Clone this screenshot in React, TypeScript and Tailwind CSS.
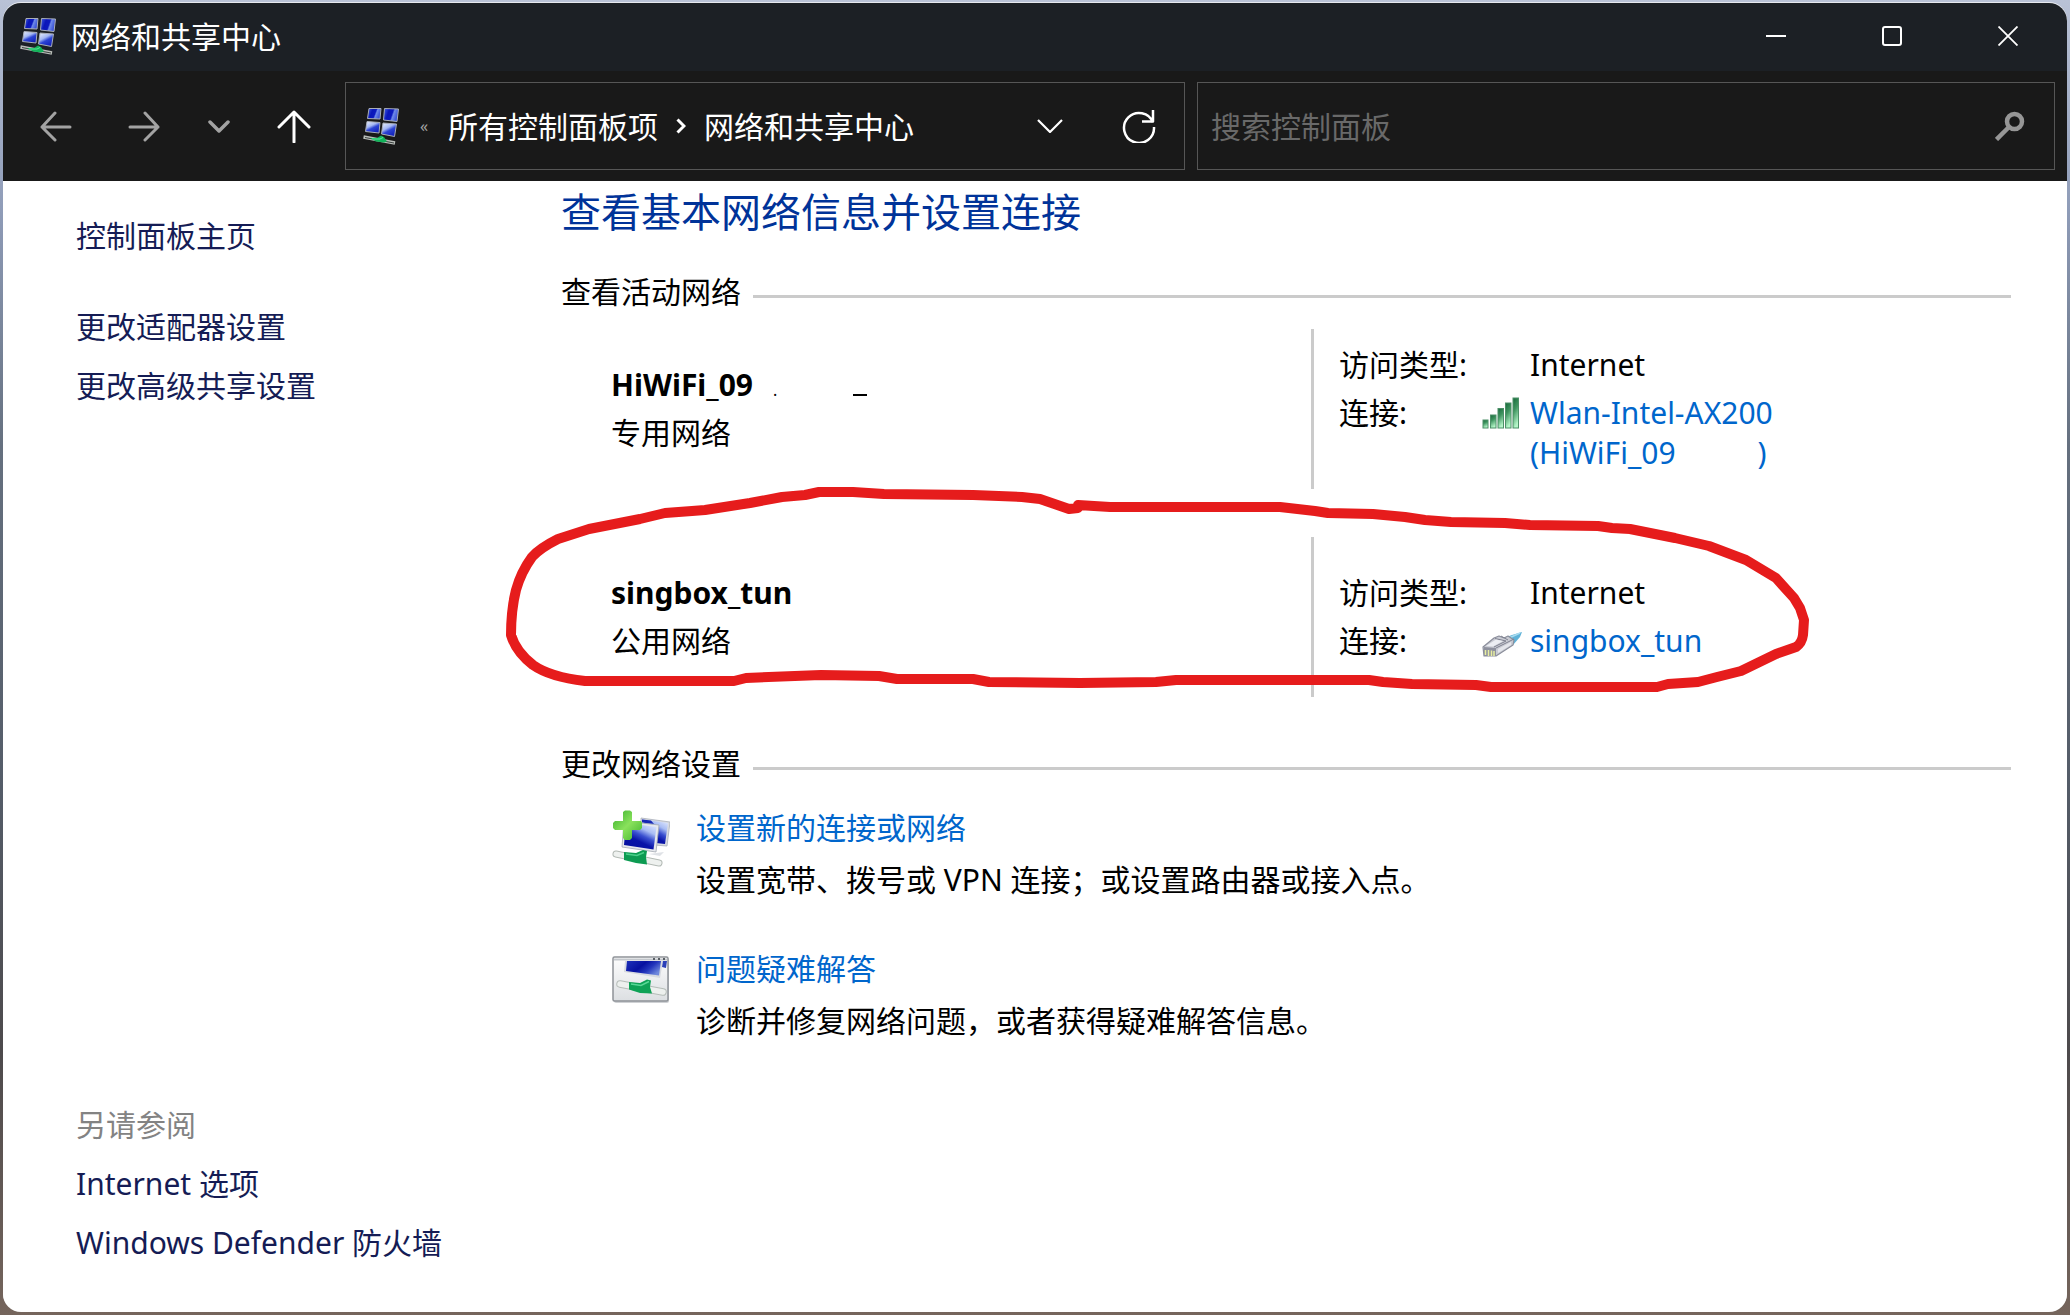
import type { ReactNode } from 'react';

interface NetworkRowProps {
  name: ReactNode;
  category: string;
  access: string;
  icon: ReactNode;
  connection: ReactNode;
  children?: ReactNode;
}

interface TaskProps {
  title: string;
  description: string;
  icon: ReactNode;
}

const NetworkCenterIcon = () => (
  <svg viewBox="0 0 37 38" className="h-[38px] w-[37px] shrink-0" aria-hidden="true">
    <defs>
      <linearGradient id="pane" x1="0" y1="0.3" x2="1" y2="0.6">
        <stop offset="0" stopColor="#3a55dc" />
        <stop offset="0.3" stopColor="#0a16b8" />
        <stop offset="0.55" stopColor="#0c1abf" />
        <stop offset="0.65" stopColor="#6f8aea" />
        <stop offset="1" stopColor="#2a42d0" />
      </linearGradient>
      <linearGradient id="paneLow" x1="0.2" y1="0" x2="0.8" y2="1">
        <stop offset="0" stopColor="#dfe7fc" />
        <stop offset="0.35" stopColor="#a3b6f2" />
        <stop offset="0.55" stopColor="#2c44d4" />
        <stop offset="1" stopColor="#0c1ab4" />
      </linearGradient>
    </defs>
    <g stroke="#a9aeb8" strokeWidth="1" strokeLinejoin="round">
      <path d="M6 1.500 18 1.500 17 12 4.500 11.500Z" fill="url(#pane)" />
      <path d="M21.500 1.500 35.500 2 34 14.500 20.500 13Z" fill="url(#pane)" />
      <path d="M4 14.500 17 15.500 16 26 2.500 24.500Z" fill="url(#paneLow)" />
      <path d="M20 16 33.500 17 31.500 29.500 18.500 27Z" fill="url(#paneLow)" />
    </g>
    <path d="M0.500 30 32 36" stroke="#b9bdb9" strokeWidth="3.500" />
    <path d="M2 30.500 31 36" stroke="#3c4240" strokeWidth="1" />
    <path d="M7 31 14 31 18 28.500 21 30 24 34.500 21 35.500 13 34.500Z" fill="#12b35a" />
    <path d="M9 32 17 32 20 30.500" stroke="#5de39a" strokeWidth="1" fill="none" />
  </svg>
);

const SignalIcon = () => (
  <svg viewBox="0 0 38 32" className="h-8 w-[38px]" aria-hidden="true">
    <defs>
      <linearGradient id="bar" x1="0" y1="0" x2="0.3" y2="1">
        <stop offset="0" stopColor="#17683a" />
        <stop offset="0.45" stopColor="#3f9560" />
        <stop offset="1" stopColor="#b4f5c8" />
      </linearGradient>
    </defs>
    <g fill="url(#bar)" stroke="#4d9068" strokeWidth="1">
      <rect x="1" y="23" width="5" height="8" />
      <rect x="8.500" y="18" width="5.500" height="13" />
      <rect x="16" y="11.500" width="5.500" height="19.500" />
      <rect x="23.500" y="6" width="5.500" height="25" />
      <rect x="31" y="1" width="5.500" height="30" />
    </g>
  </svg>
);

const EthernetIcon = () => (
  <svg viewBox="0 0 40 26" className="mt-2 h-[26px] w-10" aria-hidden="true">
    <path d="M22 6 30 3 40 0 38 5 31 13 26 15Z" fill="#5fb2d8" />
    <path d="M27 6 38 1" stroke="#a9dcf0" strokeWidth="1.5" />
    <path d="M1 15 12 6 17 4 22 6 26 4 32 8 31 13 14 24 2 24Z" fill="#c9cbd3" stroke="#8b8e9b" strokeWidth="1.2" strokeLinejoin="round" />
    <path d="M2 15 14 16 14 24 2 24Z" fill="#8e919e" />
    <path d="M14 16 32 7M13 6.500 24 9 12 15M19 4 26 8" stroke="#7f8291" strokeWidth="1" fill="none" />
    <path d="M4 14 14 7.500 21 9 11 14.500Z" fill="#eceef3" />
    <path d="M16 17 29 10 29 13 16 21Z" fill="#e4e6ec" />
    <path d="M3.500 18V23M6.500 18V24M9.500 18.500V24M12 19V24" stroke="#e8eea0" strokeWidth="1.500" />
  </svg>
);

const NewConnectionIcon = () => (
  <svg viewBox="0 0 58 58" className="h-[58px] w-[58px] shrink-0" aria-hidden="true">
    <defs>
      <linearGradient id="screen" x1="0" y1="0.1" x2="1" y2="0.6">
        <stop offset="0" stopColor="#1c2fb8" />
        <stop offset="0.45" stopColor="#0711a0" />
        <stop offset="0.7" stopColor="#2336bc" />
        <stop offset="1" stopColor="#6f88dc" />
      </linearGradient>
      <linearGradient id="screenMain" x1="0.9" y1="0" x2="0.3" y2="1">
        <stop offset="0" stopColor="#e4ebff" />
        <stop offset="0.3" stopColor="#a9bdf4" />
        <stop offset="0.5" stopColor="#3a50d0" />
        <stop offset="0.7" stopColor="#0914a8" />
        <stop offset="1" stopColor="#0510a0" />
      </linearGradient>
      <linearGradient id="plus" x1="0" y1="0" x2="1" y2="1">
        <stop offset="0" stopColor="#37ae2c" />
        <stop offset="0.5" stopColor="#8ae25c" />
        <stop offset="1" stopColor="#3fb22d" />
      </linearGradient>
    </defs>
    <path d="M29 8 58 12 55 36 29 34Z" fill="#d8dbe2" stroke="#aab0ba" strokeWidth="0.800" />
    <path d="M30 9.500 56 13 53 34 44 33Z" fill="url(#screenMain)" />
    <path d="M30 9.500 39 10.500 42 14 30 12.500Z" fill="#1627b4" />
    <path d="M37 44 52 42 48 46Z" fill="#dfe2e6" />
    <path d="M12 11 47 15 44 42 10 37Z" fill="#e6e8ed" stroke="#a3a9b3" strokeWidth="0.800" />
    <path d="M14 13 44.500 17 41.500 39.500 12 35Z" fill="url(#screenMain)" />
    <path d="M4 44 47 53" stroke="#b3bab5" strokeWidth="7" strokeLinecap="round" />
    <path d="M4 44 47 53" stroke="#eef1ef" strokeWidth="5" strokeLinecap="round" />
    <path d="M12 42 24 43 31 40 35 41 34 47 35 54.500 24 53 12 50Z" fill="#0d9b52" />
    <path d="M14 44 25 45.500 32 42.500" stroke="#4bd08a" strokeWidth="1.500" fill="none" />
    <path d="M11 2 13 0.500 18 0.500 20 2 20 11 29 11 30 13 30 18 28 20 20 20 20 28 18 30 13 30 11 28 11 20 3 20 1 18 1 13 3 11 11 11Z" fill="url(#plus)" />
  </svg>
);

const TroubleshootIcon = () => (
  <svg viewBox="0 0 58 58" className="h-[58px] w-[58px] shrink-0" aria-hidden="true">
    <defs>
      <linearGradient id="frame" x1="0" y1="0" x2="0" y2="1">
        <stop offset="0" stopColor="#fdfdfd" />
        <stop offset="1" stopColor="#dcdfe2" />
      </linearGradient>
    </defs>
    <rect x="2" y="7" width="55" height="45" rx="2" fill="#cfd1d4" />
    <rect x="1" y="6" width="55" height="44" rx="1.500" fill="url(#frame)" stroke="#8f9398" strokeWidth="1.500" />
    <path d="M2 7.500H55V9.500H2Z" fill="#c3c7cc" />
    <path d="M41 8H43M46 8H48M51 8H53" stroke="#5b6066" strokeWidth="1.800" />
    <path d="M13 10 51 10 48 27 12 21Z" fill="#d7dae0" />
    <path d="M15 10 49 10 47 24.500 14 20Z" fill="url(#screen)" />
    <path d="M51 10 55 10 54 17 50 16Z" fill="#2b40b8" />
    <path d="M8 33 51 41" stroke="#b6bdb9" strokeWidth="7.500" strokeLinecap="round" />
    <path d="M8 33 51 41" stroke="#edf0ee" strokeWidth="5.500" strokeLinecap="round" />
    <path d="M17 31 28 32 35 28.500 39 29.500 38 36 40 42.500 28 42 17 38.500Z" fill="#0ea256" />
    <path d="M19 33 29 34.500 37 30.500" stroke="#58d896" strokeWidth="1.500" fill="none" />
  </svg>
);

/* Freehand loop around the tunnel adapter */
const RedCircle = () => (
  <svg
    viewBox="500 480 1315 220"
    className="pointer-events-none absolute -top-[57px] -left-[61px] h-[220px] w-[1315px]"
    fill="none"
    stroke="#e61c1c"
    strokeWidth="10"
    strokeLinecap="round"
    strokeLinejoin="round"
    aria-hidden="true"
  >
    <path d="M1078 508 1069 509 1040 499 1022 497 973 495 884 494 853 492 819 492 805 495 782 497 750 503 705 510 692 511 665 513 640 519 589 529 558 539Q540 548 532 557 521 572 516 590 511 610 511 635 516 652 533 665 550 677 585 681L734 681 746 678 821 675 879 676 897 679 973 679 989 682 1080 683 1156 682 1176 680 1369 680 1383 682 1412 684 1476 685 1491 687 1657 687 1668 684 1698 682 1717 677 1741 671 1776 654 1796 647Q1802 643 1803 635L1804 620 1800 608 1794 598 1776 578 1746 560 1709 546 1675 538 1630 529 1612 528 1598 526 1530 525 1505 523 1451 522 1425 520 1405 517 1373 514 1328 513 1315 511 1280 507 1110 507 1078 505" />
  </svg>
);

const SectionTitle = ({ children }: { children: ReactNode }) => (
  <div className="flex items-center gap-3">
    <h2 className="leading-10">{children}</h2>
    <div className="mt-[9px] h-[3px] flex-1 bg-[#cbcbcb]" />
  </div>
);

const NetworkRow = ({ name, category, access, icon, connection, children }: NetworkRowProps) => (
  <div className="relative grid grid-cols-[15fr_14fr] leading-[48px]">
    <div className="pt-8 pl-[50px]">
      <h3 className="font-bold">{name}</h3>
      <p>{category}</p>
    </div>
    <dl className="grid min-h-40 grid-cols-[143px_1fr] content-center border-l-[3px] border-[#cbcbcb] pl-[25px]">
      <dt>访问类型:</dt>
      <dd className="pl-12">{access}</dd>
      <dt>连接:</dt>
      <dd className="flex">
        <span className="flex h-12 w-12 shrink-0 items-center">{icon}</span>
        <a href="#" className="my-1 leading-10 text-[#0066cc]">{connection}</a>
      </dd>
    </dl>
    {children}
  </div>
);

const Task = ({ title, description, icon }: TaskProps) => (
  <div className="flex gap-[26px] leading-[52px]">
    <div className="pt-2">{icon}</div>
    <div>
      <a href="#" className="text-[#0066cc]">{title}</a>
      <p>{description}</p>
    </div>
  </div>
);

const TitleBar = () => (
  <header className="flex h-[68px] items-center bg-[#1c2025] pr-px pb-0.5 pl-[17px] text-white">
    <NetworkCenterIcon />
    <h1 className="ml-[14px] flex-1">网络和共享中心</h1>
    <button aria-label="最小化" className="flex h-full w-[116px] items-center justify-center">
      <svg width="20" height="20" stroke="currentColor" strokeWidth="2"><path d="M0 10H20" /></svg>
    </button>
    <button aria-label="最大化" className="flex h-full w-[116px] items-center justify-center">
      <svg width="20" height="20" fill="none" stroke="currentColor" strokeWidth="2"><rect x="1" y="1" width="18" height="18" rx="2" /></svg>
    </button>
    <button aria-label="关闭" className="flex h-full w-[116px] items-center justify-center">
      <svg width="20" height="20" stroke="currentColor" strokeWidth="1.800"><path d="M0.500 0.500 19.500 19.500M19.500 0.500 0.500 19.500" /></svg>
    </button>
  </header>
);

const Toolbar = () => (
  <div className="flex h-[110px] items-center bg-[#191919] pr-3 pl-[9px] text-white">
    <nav className="mr-[7px] flex items-center text-[#a3a3a3]">
      <button aria-label="后退" className="flex h-16 w-[88px] items-center justify-center">
        <svg width="32" height="32" fill="none" stroke="currentColor" strokeWidth="3" strokeLinecap="round" strokeLinejoin="round"><path d="M30 17H2M15 3 2 17 15 30" /></svg>
      </button>
      <button aria-label="前进" className="flex h-16 w-[88px] items-center justify-center">
        <svg width="32" height="32" fill="none" stroke="currentColor" strokeWidth="3" strokeLinecap="round" strokeLinejoin="round"><path d="M2 17H30M17 3 30 17 17 30" /></svg>
      </button>
      <button aria-label="最近位置" className="flex h-16 w-[62px] items-center justify-center">
        <svg width="22" height="14" fill="none" stroke="currentColor" strokeWidth="3.500" strokeLinecap="round" strokeLinejoin="round"><path d="M2 3 11 12 20 3" /></svg>
      </button>
      <button aria-label="上移" className="flex h-16 w-[88px] items-center justify-center text-white">
        <svg width="34" height="34" fill="none" stroke="currentColor" strokeWidth="3" strokeLinecap="round" strokeLinejoin="round"><path d="M17 33V3M2 18 17 3 32 18" /></svg>
      </button>
    </nav>
    <div className="grid flex-1 grid-cols-[840fr_858fr] gap-3">
      <div className="flex h-[88px] min-w-0 items-center border border-[#565656] pl-[17px]">
        <NetworkCenterIcon />
        <span className="ml-5 w-7 text-base text-[#a3a3a3]">«</span>
        <button>所有控制面板项</button>
        <svg width="10" height="16" className="mx-[18px]" fill="none" stroke="currentColor" strokeWidth="3"><path d="M1.500 1.500 8 8 1.500 14.500" /></svg>
        <button>网络和共享中心</button>
        <button aria-label="历史记录" className="ml-auto flex h-full w-[88px] items-center justify-center">
          <svg width="26" height="14" fill="none" stroke="currentColor" strokeWidth="2.200"><path d="M1 1 13 13 25 1" /></svg>
        </button>
        <button aria-label="刷新" className="flex h-full w-[90px] items-center justify-center">
          <svg width="34" height="34" fill="none" stroke="currentColor" strokeWidth="2.500" strokeLinejoin="round"><path d="M31 13.500A15 15 0 1 0 32 18M31 1V12.500H20" /></svg>
        </button>
      </div>
      <div className="flex h-[88px] min-w-0 items-center border border-[#565656]">
        <input
          type="text"
          aria-label="搜索控制面板"
          placeholder="搜索控制面板"
          className="h-full min-w-0 flex-1 bg-transparent pl-[13px] outline-none placeholder:text-[#696969]"
        />
        <button aria-label="搜索" className="flex h-full w-[88px] items-center justify-center text-[#969696]">
          <svg width="30" height="30" fill="none" stroke="currentColor"><circle cx="19.500" cy="10.500" r="7.500" strokeWidth="4.500" /><path d="M14 16 1.500 28.500" strokeWidth="4.500" /></svg>
        </button>
      </div>
    </div>
  </div>
);

const Sidebar = () => (
  <aside className="flex w-[558px] shrink-0 flex-col pt-[25px] pb-10 pl-[73px] leading-[59px] text-[#151c55]">
    <a href="#">控制面板主页</a>
    <a href="#" className="mt-8">更改适配器设置</a>
    <a href="#">更改高级共享设置</a>
    <h2 className="mt-auto text-[#838383]">另请参阅</h2>
    <a href="#">Internet 选项</a>
    <a href="#">Windows Defender 防火墙</a>
  </aside>
);

const App = () => (
  <div className="flex min-h-screen flex-col bg-[linear-gradient(#b9c2d6,#8f9cb8_16%,#65707f_34%,#545c68_60%,#4d4a4c_80%,#75655c)] p-[3px] font-['Noto_Sans','Noto_Sans_CJK_SC',sans-serif] text-[30px] text-black">
    <div className="flex flex-1 flex-col overflow-hidden rounded-[18px] bg-white shadow-[0_-1px_0_#e6e9ef]">
      <TitleBar />
      <Toolbar />
      <div className="flex flex-1">
        <Sidebar />
        <main className="flex-1 pt-[11px] pr-14">
          <h1 className="text-[40px] leading-10 text-[#003399]">查看基本网络信息并设置连接</h1>

          <section className="mt-10">
            <SectionTitle>查看活动网络</SectionTitle>
            <div className="mt-[17px] flex flex-col gap-12">
              <NetworkRow
                name={
                  <>
                    HiWiFi_09
                    <span className="ml-5 text-base font-normal">.</span>
                    <span className="ml-[76px] inline-block h-0.5 w-[14px] bg-black" />
                  </>
                }
                category="专用网络"
                access="Internet"
                icon={<SignalIcon />}
                connection={
                  <>
                    Wlan-Intel-AX200
                    <br />
                    (HiWiFi_09<span className="ml-[82px]">)</span>
                  </>
                }
              />
              <NetworkRow
                name="singbox_tun"
                category="公用网络"
                access="Internet"
                icon={<EthernetIcon />}
                connection="singbox_tun"
              >
                <RedCircle />
              </NetworkRow>
            </div>
          </section>

          <section className="mt-[47px]">
            <SectionTitle>更改网络设置</SectionTitle>
            <div className="mt-[18px] flex flex-col gap-[37px] pl-[51px]">
              <Task
                title="设置新的连接或网络"
                description="设置宽带、拨号或 VPN 连接；或设置路由器或接入点。"
                icon={<NewConnectionIcon />}
              />
              <Task
                title="问题疑难解答"
                description="诊断并修复网络问题，或者获得疑难解答信息。"
                icon={<TroubleshootIcon />}
              />
            </div>
          </section>
        </main>
      </div>
    </div>
  </div>
);

export default App;
